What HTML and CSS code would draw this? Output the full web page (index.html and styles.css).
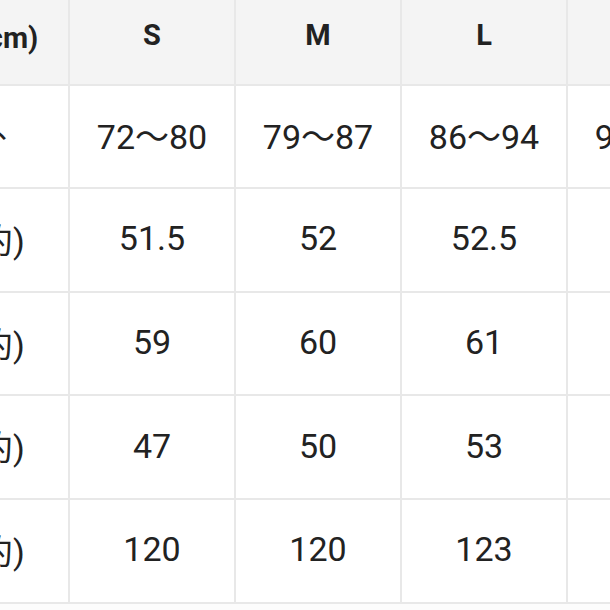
FILE: index.html
```html
<!DOCTYPE html>
<html lang="zh">
<head>
<meta charset="utf-8">
<link rel="stylesheet" href="styles.css">
</head>
<body>
<div class="sheet">
  <div class="grid">
    <div class="cell head label">尺码(cm)</div>
    <div class="cell head">S</div>
    <div class="cell head">M</div>
    <div class="cell head">L</div>
    <div class="cell head">XL</div>

    <div class="cell label label-wide">胸围内外</div>
    <div class="cell">72～80</div>
    <div class="cell">79～87</div>
    <div class="cell">86～94</div>
    <div class="cell">93～99</div>

    <div class="cell label">衣长(约)</div>
    <div class="cell">51.5</div>
    <div class="cell">52</div>
    <div class="cell">52.5</div>
    <div class="cell"></div>

    <div class="cell label">胸宽(约)</div>
    <div class="cell">59</div>
    <div class="cell">60</div>
    <div class="cell">61</div>
    <div class="cell"></div>

    <div class="cell label">袖长(约)</div>
    <div class="cell">47</div>
    <div class="cell">50</div>
    <div class="cell">53</div>
    <div class="cell"></div>

    <div class="cell label">下摆(约)</div>
    <div class="cell">120</div>
    <div class="cell">120</div>
    <div class="cell">123</div>
    <div class="cell"></div>
  </div>
</div>
</body>
</html>
```
FILE: styles.css
```css
html, body {
  margin: 0;
  padding: 0;
  background: #ffffff;
}
.sheet {
  width: 610px;
  height: 610px;
  overflow: hidden;
  background: #fcfcfc;
}
.grid {
  display: grid;
  grid-template-columns: repeat(5, 164px);
  grid-auto-rows: 101.6px;
  gap: 2px;
  background: #e8e8e8;
  margin-top: -18px;
  margin-left: -96px;
  width: max-content;
  padding-bottom: 2px;
}
.cell {
  background: #ffffff;
  display: flex;
  align-items: center;
  justify-content: center;
  font-family: Roboto, "Noto Sans CJK SC", sans-serif;
  font-size: 34px;
  color: #222222;
  white-space: nowrap;
  padding-bottom: 3px;
}
.head {
  background: #f4f4f4;
  font-weight: 700;
  font-size: 29px;
  padding-top: 4px;
  padding-bottom: 0;
}
.label {
  padding-right: 48px;
}
.head.label {
  padding-right: 14px;
}
.label-wide {
  padding-right: 94px;
}
```
